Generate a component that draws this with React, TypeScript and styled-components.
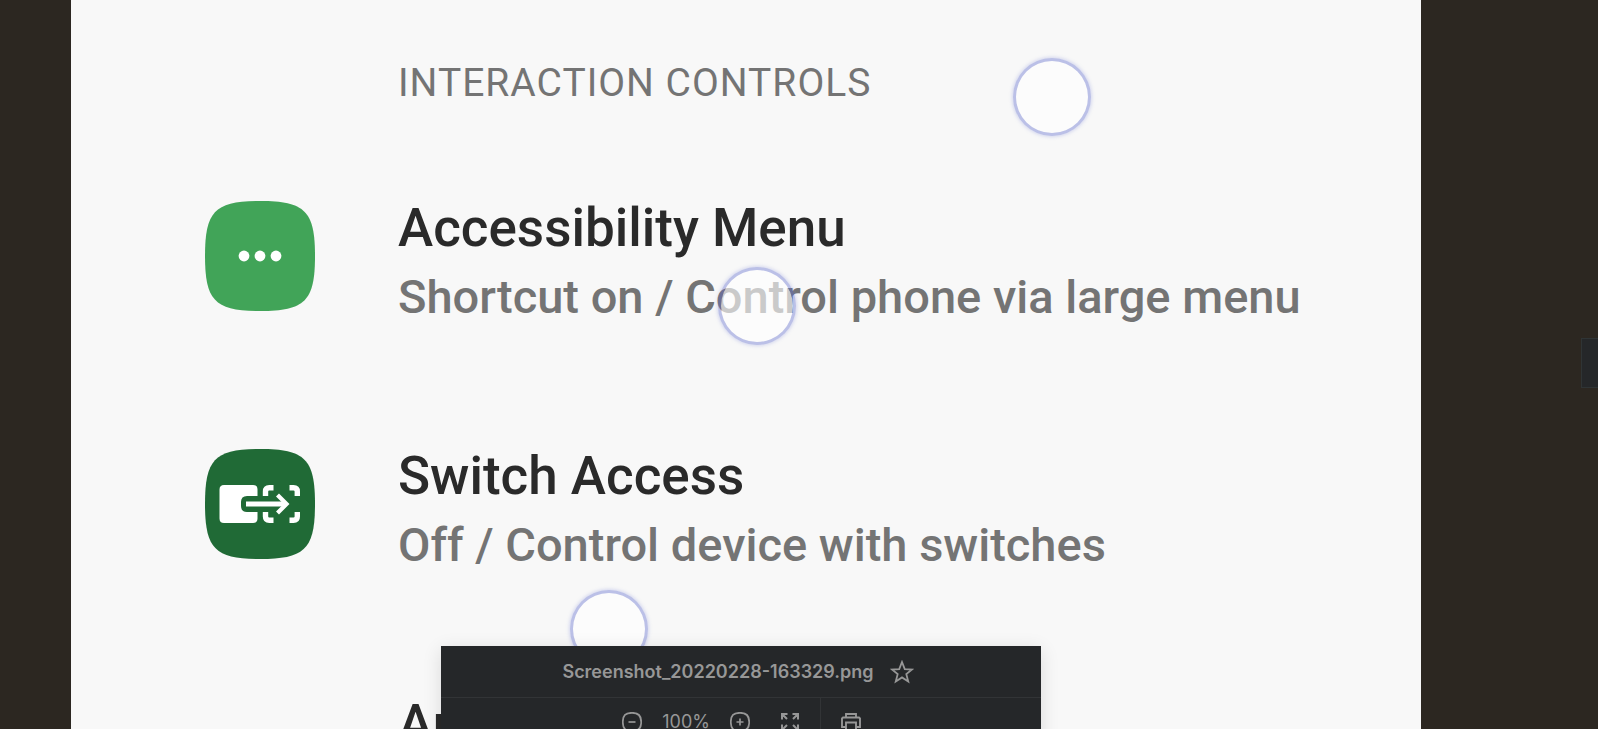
import React from "react";
import styled, { createGlobalStyle } from "styled-components";

const GlobalStyle = createGlobalStyle`
  *, *::before, *::after { box-sizing: border-box; }
  body { margin: 0; background: #2c2721; }
  button { margin: 0; padding: 0; border: 0; background: none; color: inherit; cursor: pointer; }
`;

const Viewer = styled.div`
  position: relative;
  height: 100vh;
  overflow: hidden;
  display: flex;
  padding: 0 177px 0 71px;
  background: #2c2721;
  font-family: Roboto, "Liberation Sans", sans-serif;
`;

const Sheet = styled.main`
  flex: 1;
  min-width: 0;
  padding: 59px 48px 0 133px;
  background: #f8f8f8;
`;

const SectionTitle = styled.h1`
  margin: 0 0 86px;
  padding-left: 194px;
  color: #747474;
  font-size: 39px;
  font-weight: 400;
  line-height: 48px;
  letter-spacing: 1px;
  white-space: nowrap;
`;

const SettingList = styled.ul`
  display: flex;
  flex-direction: column;
  gap: 110px;
  margin: 0;
  padding: 0;
  list-style: none;
`;

const SettingRow = styled.li`
  display: flex;
  gap: 83px;
`;

const IconSlot = styled.div`
  flex: none;
  width: 111px;
  padding: 8px 0 0 1px;

  svg { display: block; }
`;

const SettingName = styled.h2`
  margin: 0;
  color: #2a2a2a;
  font-size: 53px;
  font-weight: 500;
  line-height: 70px;
  white-space: nowrap;
`;

const SettingHint = styled.p`
  margin: 0;
  color: #747474;
  font-size: 47px;
  font-weight: 500;
  line-height: 68px;
  white-space: nowrap;
`;

const TouchDot = styled.span<{ $x: number; $y: number }>`
  position: absolute;
  left: ${(p) => p.$x - 39}px;
  top: ${(p) => p.$y - 39}px;
  width: 78px;
  height: 78px;
  border: 3px solid rgba(95, 108, 205, 0.4);
  border-radius: 50%;
  background: rgba(255, 255, 255, 0.62);
  background-clip: padding-box;
  box-shadow: 0 0 4px rgba(105, 118, 212, 0.4);
`;

const Toolbar = styled.section`
  position: absolute;
  left: 441px;
  top: 646px;
  width: 600px;
  background: #252729;
  color: #979797;
  box-shadow: 0 4px 18px rgba(0, 0, 0, 0.12);
  font-family: Inter, "Liberation Sans", sans-serif;
  font-size: 18px;
  line-height: 24px;
`;

const FileBar = styled.header`
  display: flex;
  align-items: center;
  justify-content: center;
  gap: 16px;
  height: 52px;
  padding-right: 6px;
  border-bottom: 1px solid #323436;
`;

const FileName = styled.strong`
  font-weight: 600;
`;

const ToolRow = styled.div`
  display: flex;
  height: 48px;
`;

const ZoomTools = styled.div`
  display: flex;
  align-items: center;
  justify-content: flex-end;
  gap: 20px;
  width: 380px;
  padding-right: 20px;
  border-right: 1px solid #323436;
`;

const FileTools = styled.div`
  display: flex;
  align-items: center;
  padding-left: 20px;
`;

const ToolButton = styled.button<{ $spaced?: boolean }>`
  display: flex;
  margin-left: ${(p) => (p.$spaced ? 10 : 0)}px;
`;

const NextButton = styled.button`
  position: absolute;
  right: 0;
  top: 338px;
  width: 17px;
  height: 50px;
  border: 1px solid #2f3435;
  border-right: 0;
  background: #252729;
`;

const Squircle = ({ fill, children }: { fill: string; children?: React.ReactNode }) => (
  <svg width="110" height="110" viewBox="0 0 110 110" aria-hidden="true">
    <path d="M0 55C0 10 10 0 55 0S110 10 110 55 100 110 55 110 0 100 0 55Z" fill={fill} />
    {children}
  </svg>
);

const MenuIcon = () => (
  <Squircle fill="#41a458">
    <circle cx="39" cy="55" r="5.4" fill="#fff" />
    <circle cx="55" cy="55" r="5.4" fill="#fff" />
    <circle cx="71" cy="55" r="5.4" fill="#fff" />
  </Squircle>
);

const SwitchIcon = () => (
  <Squircle fill="#206a36">
    <path
      fill="#fff"
      d="M19 36H48Q52.5 36 52.5 40.500V47H42Q36 47 36 53V57Q36 63 42 63H52.500V69.500Q52.500 74 48 74H19Q14.500 74 14.500 69.500V40.500Q14.500 36 19 36Z"
    />
    <g fill="none" stroke="#fff" strokeWidth="5.400">
      <path d="M60.500 47V42.500Q60.500 38.700 64.300 38.700H68.500" />
      <path d="M60.500 63V67.500Q60.500 71.300 64.300 71.300H68.500" />
      <path d="M84.500 38.700H88.500Q92.300 38.700 92.300 42.500V47" />
      <path d="M84.500 71.300H88.500Q92.300 71.300 92.300 67.500V63" />
      <path d="M41 55H79" strokeWidth="5" />
      <path d="M72.500 46L81.500 55L72.500 64" strokeWidth="4.200" />
    </g>
  </Squircle>
);

const ToolIcon = ({ size = 20, children }: { size?: number; children: React.ReactNode }) => (
  <svg
    width={size}
    height={size}
    viewBox="0 0 20 20"
    fill="none"
    stroke="currentColor"
    strokeWidth="1.700"
    aria-hidden="true"
  >
    {children}
  </svg>
);

const Round = "M10 .8C16.500 .8 19.200 3.500 19.200 10S16.500 19.200 10 19.200 .8 16.500 .8 10 3.500 .8 10 .8Z";

const settings = [
  {
    name: "Accessibility Menu",
    hint: "Shortcut on / Control phone via large menu",
    icon: <MenuIcon />,
  },
  { name: "Switch Access", hint: "Off / Control device with switches", icon: <SwitchIcon /> },
  { name: "An" },
];

export default function App() {
  return (
    <>
      <GlobalStyle />
      <Viewer>
        <Sheet>
          <SectionTitle>INTERACTION CONTROLS</SectionTitle>
          <SettingList>
            {settings.map((s) => (
              <SettingRow key={s.name}>
                <IconSlot>{s.icon}</IconSlot>
                <div>
                  <SettingName>{s.name}</SettingName>
                  {s.hint && <SettingHint>{s.hint}</SettingHint>}
                </div>
              </SettingRow>
            ))}
          </SettingList>
        </Sheet>
        <TouchDot $x={1052} $y={97} />
        <TouchDot $x={757} $y={306} />
        <TouchDot $x={609} $y={629} />
        <NextButton aria-label="Next file" />
        <Toolbar>
          <FileBar>
            <FileName>Screenshot_20220228-163329.png</FileName>
            <ToolButton aria-label="Star file">
              <ToolIcon size={24}>
                <path
                  strokeWidth="1.500"
                  d="M10 1.700L12.300 7.600L18.400 7.900L13.600 11.800L15.200 17.900L10 14.500L4.800 17.900L6.400 11.800L1.600 7.900L7.700 7.600Z"
                />
              </ToolIcon>
            </ToolButton>
          </FileBar>
          <ToolRow>
            <ZoomTools>
              <ToolButton aria-label="Zoom out">
                <ToolIcon>
                  <path d={Round} />
                  <path d="M6.500 10H13.500" />
                </ToolIcon>
              </ToolButton>
              <span>100%</span>
              <ToolButton aria-label="Zoom in">
                <ToolIcon>
                  <path d={Round} />
                  <path d="M6.500 10H13.500M10 6.500V13.500" />
                </ToolIcon>
              </ToolButton>
              <ToolButton aria-label="Full screen" $spaced>
                <ToolIcon>
                  <path
                    strokeWidth="2"
                    d="M2 7.500V2H7.500M2 2L7 7M12.500 2H18V7.500M18 2L13 7M2 12.500V18H7.500M2 18L7 13M18 12.500V18H12.500M18 18L13 13"
                  />
                </ToolIcon>
              </ToolButton>
            </ZoomTools>
            <FileTools>
              <ToolButton aria-label="Print">
                <ToolIcon>
                  <path
                    strokeWidth="1.900"
                    d="M5 5.500V2H15V5.500M5 15H1V6.500L2 5.500H18L19 6.500V15H15M5 19V10.500H15V19Z"
                  />
                </ToolIcon>
              </ToolButton>
            </FileTools>
          </ToolRow>
        </Toolbar>
      </Viewer>
    </>
  );
}
